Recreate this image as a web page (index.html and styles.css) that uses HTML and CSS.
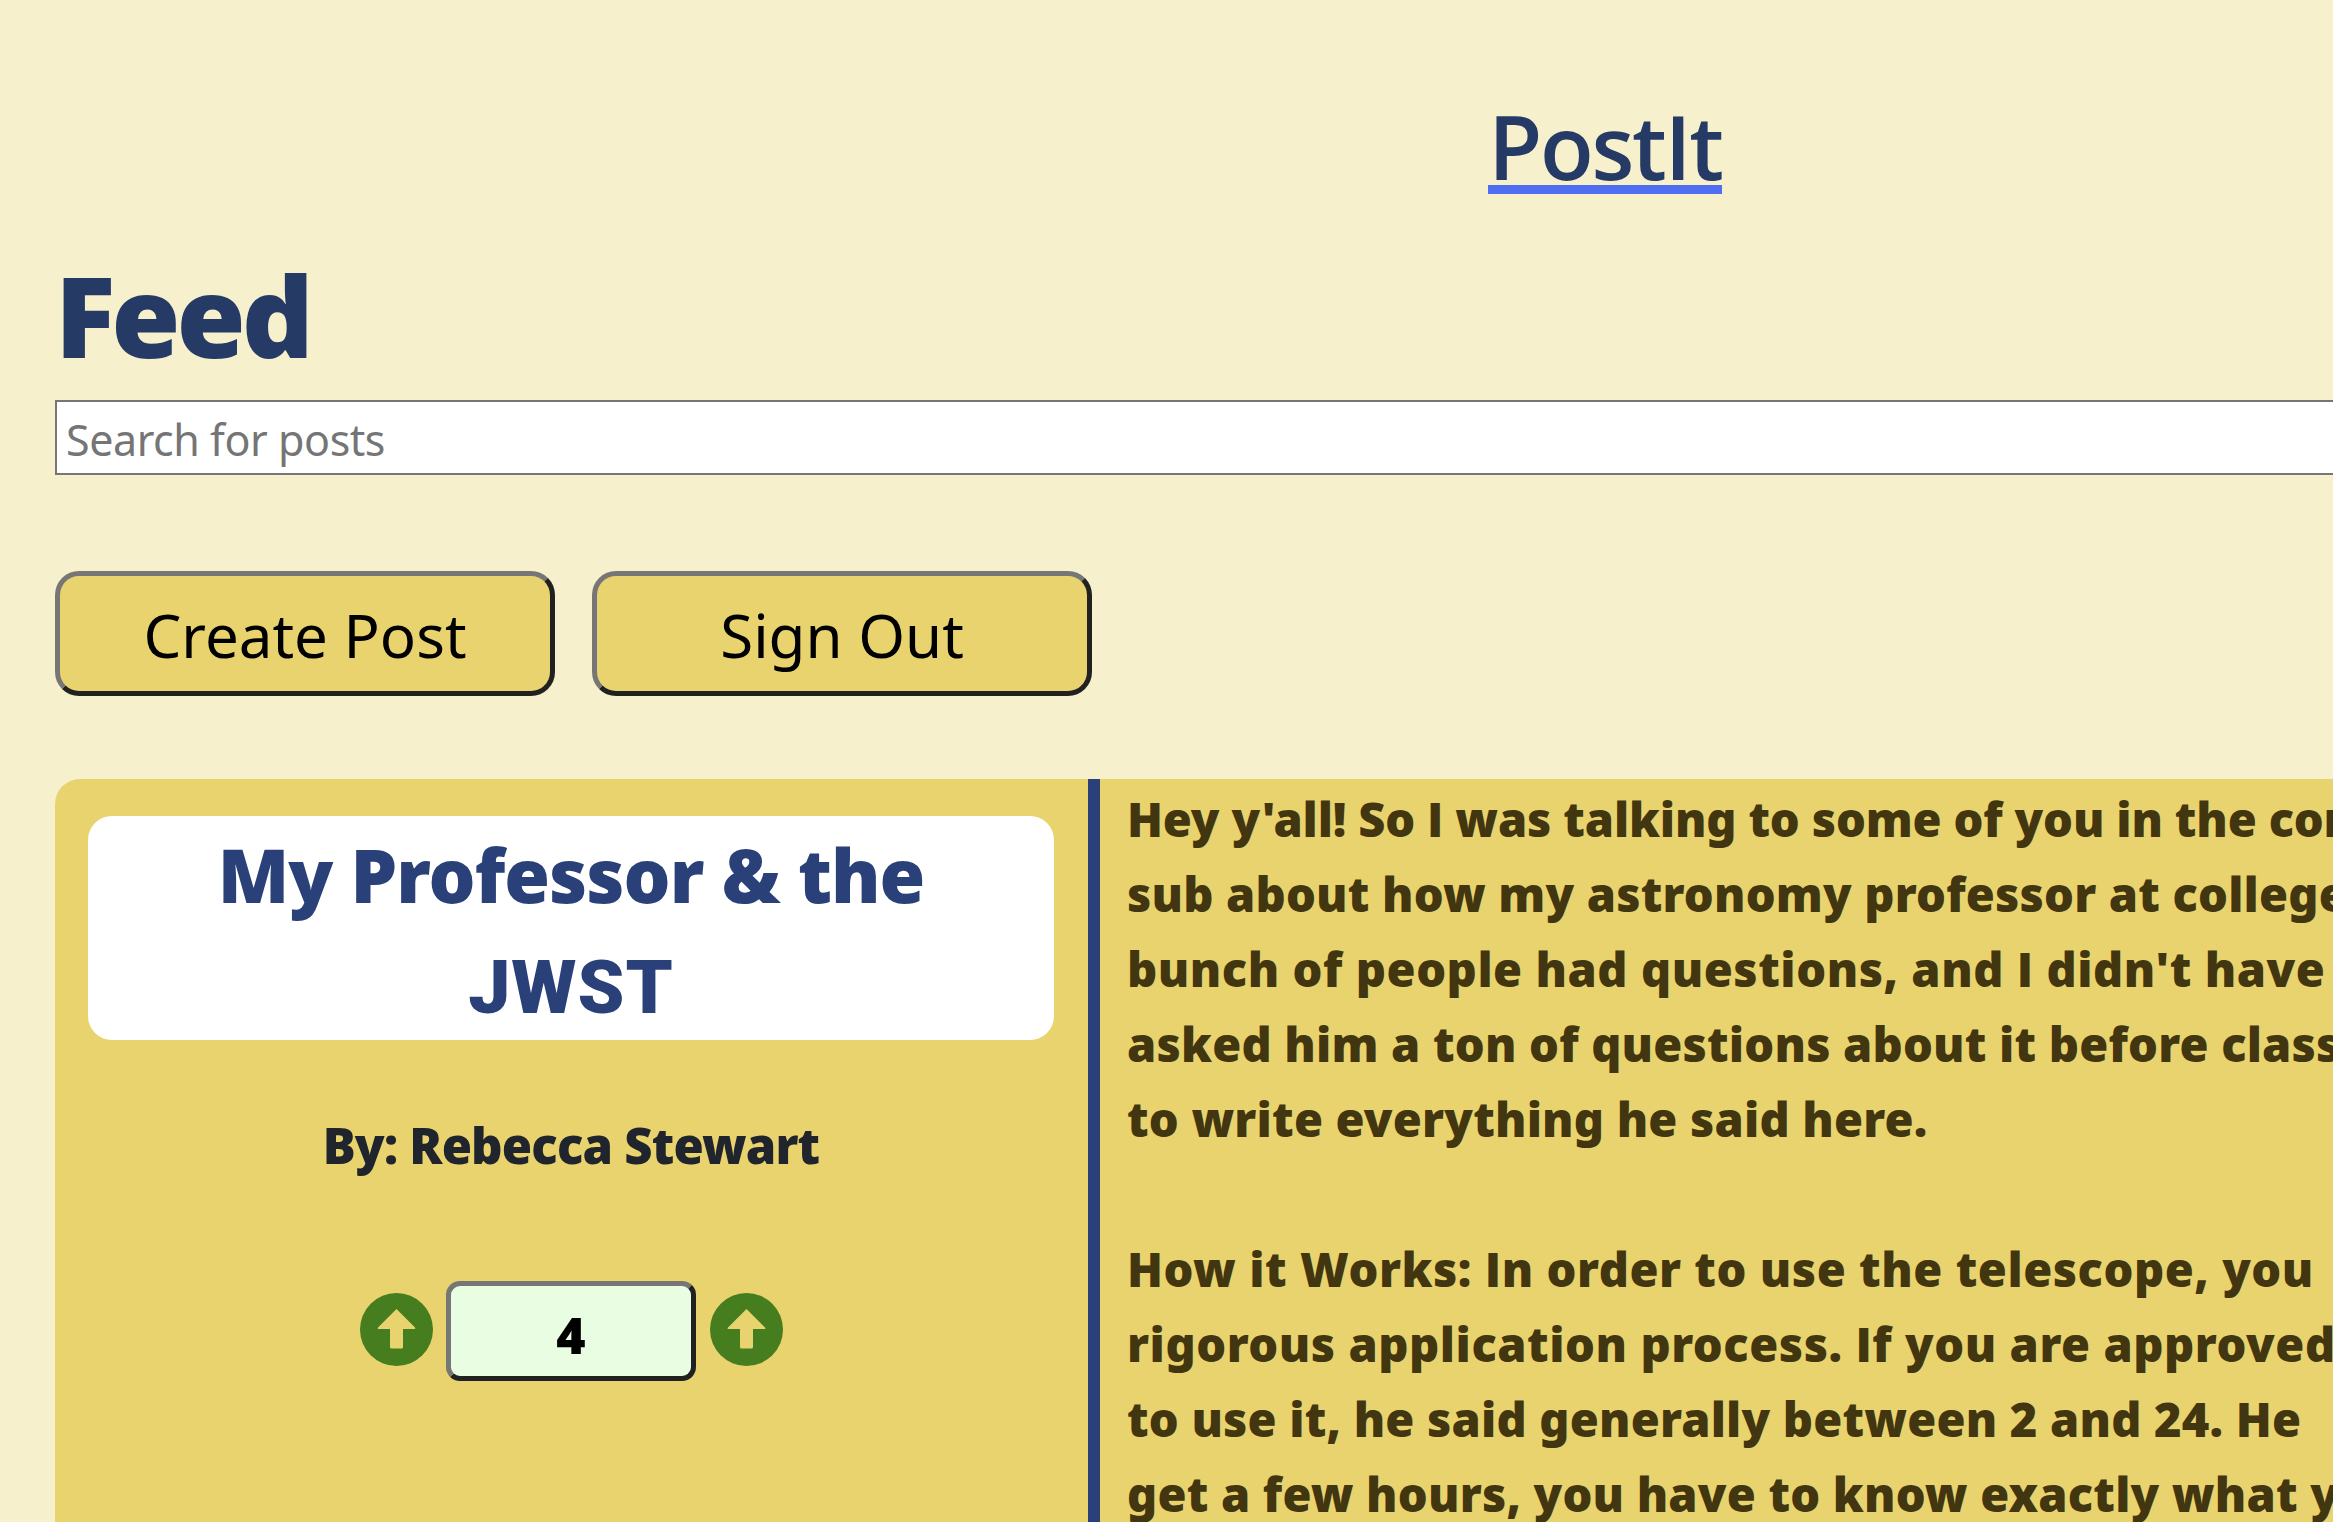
FILE: index.html
```html
<!DOCTYPE html>
<html lang="en">
<head>
<meta charset="utf-8">
<title>PostIt</title>
<link rel="stylesheet" href="styles.css">
</head>
<body>
<div class="page">
  <header class="site-header"><a class="brand" href="#">PostIt</a></header>
  <h1 class="feed-title">Feed</h1>
  <input class="search" type="text" placeholder="Search for posts">
  <div class="actions">
    <button class="action" type="button">Create Post</button>
    <button class="action" type="button">Sign Out</button>
  </div>
  <article class="post">
    <div class="post-side">
      <h2 class="post-title">My Professor &amp; the <span class="acronym">JWST</span></h2>
      <p class="post-author">By: Rebecca Stewart</p>
      <div class="votes">
        <span class="vote"><svg viewBox="0 0 73 73" width="73" height="73"><circle cx="36.5" cy="36.5" r="36.5" fill="#467d1e"/><path d="M36.5 16 L55 34.500 Q56 36 54.500 36 H43 V54 Q43 55.500 41.500 55.500 H31.500 Q30 55.500 30 54 V36 H18.500 Q17 36 18 34.500 Z" fill="#e8d36f"/></svg></span>
        <div class="score">4</div>
        <span class="vote"><svg viewBox="0 0 73 73" width="73" height="73"><circle cx="36.5" cy="36.5" r="36.5" fill="#467d1e"/><path d="M36.5 16 L55 34.500 Q56 36 54.500 36 H43 V54 Q43 55.500 41.500 55.500 H31.500 Q30 55.500 30 54 V36 H18.500 Q17 36 18 34.500 Z" fill="#e8d36f"/></svg></span>
      </div>
    </div>
    <div class="post-body">
      <div class="line tight">Hey y'all! So <span class="cap-i">I</span> was talking to some of you in the comments</div>
      <div class="line">sub about how my astronomy professor at college</div>
      <div class="line loose">bunch of people had questions, and <span class="cap-i">I</span> didn't have</div>
      <div class="line">asked him a ton of questions about it before class</div>
      <div class="line">to write everything he said here.</div>
      <div class="line gap"></div>
      <div class="line loose">How it Works: <span class="cap-i">I</span>n order to use the telescope, you</div>
      <div class="line loose">rigorous application process. <span class="cap-i">I</span>f you are approved</div>
      <div class="line">to use it, he said generally between 2 and 24. He</div>
      <div class="line">get a few hours, you have to know exactly what you</div>
    </div>
  </article>
</div>
</body>
</html>
```
FILE: styles.css
```css
html, body { margin: 0; height: 100%; overflow: hidden; background: #f7f0cd; }
body { font-family: "Noto Sans", "Open Sans", sans-serif; }
.page { height: 1522px; padding-left: 55px; }
.site-header { height: 194px; padding-left: 1433px; box-sizing: border-box; padding-top: 107px; }
.brand { display: block; font-family: "Open Sans", sans-serif; font-size: 88px; line-height: 78px; height: 78px; font-weight: 600; letter-spacing: -2.25px; color: #263a66; text-decoration: none; border-bottom: 9px solid #4f6ef0; width: 234px; text-align: center; white-space: nowrap; }
.feed-title { margin: 56px 0 0; font-size: 112px; line-height: 130px; font-weight: 900; letter-spacing: -4px; color: #263a66; height: 150px; }
.search { display: block; width: 2400px; height: 75px; box-sizing: border-box; border: 2px solid #767676; background: #fff; padding: 4px 9px 0; font: 43px "Noto Sans", sans-serif; letter-spacing: -0.45px; border-radius: 0; }
.search::placeholder { color: #757575; }
.actions { display: flex; gap: 37px; margin-top: 96px; }
.action { width: 500px; height: 125px; box-sizing: border-box; background: #e8d36f; border: 5px solid; border-color: #767676 #212121 #212121 #767676; border-radius: 24px; padding-top: 3px; font: 60px "Noto Sans", sans-serif; color: #000; }
.post { display: grid; grid-template-columns: 1045px 1400px; margin-top: 83px; background: #e8d36f; border-radius: 25px 0 0 0; height: 800px; }
.post-side { border-right: 12px solid #2a4078; padding: 37px 34px 0 33px; display: flex; flex-direction: column; }
.post-title { margin: 0; background: #fff; border-radius: 24px; text-align: center; padding: 4px 90px 0; box-sizing: border-box; font-size: 74px; line-height: 110px; height: 224px; font-weight: 900; letter-spacing: -1px; color: #2a4078; }
.acronym { font-family: "Roboto", sans-serif; font-weight: 900; font-size: 75px; letter-spacing: 1px; }
.post-author { margin: 70px 0 0; text-align: center; font-size: 49px; line-height: 70px; font-weight: 900; letter-spacing: -0.8px; color: #20242c; }
.votes { display: flex; justify-content: center; align-items: center; gap: 13px; margin-top: 101px; padding-left: 1px; }
.vote { display: block; width: 73px; height: 73px; margin-top: -4px; }
.vote svg { display: block; }
.score { width: 250px; height: 100px; box-sizing: border-box; margin-right: 1px; background: #e9fde2; border: 5px solid; border-color: #767676 #212121 #212121 #767676; border-radius: 14px; text-align: center; font-size: 50px; line-height: 98px; font-weight: 900; color: #000; }
.post-body { padding: 3px 0 0 27px; font-size: 47px; line-height: 75px; font-weight: 900; letter-spacing: 0.2px; color: #423610; }
.line { white-space: nowrap; height: 75px; }
.tight { letter-spacing: -0.15px; }
.loose { letter-spacing: 0.55px; }
.cap-i { font-family: "Open Sans", sans-serif; font-weight: 800; }
```
